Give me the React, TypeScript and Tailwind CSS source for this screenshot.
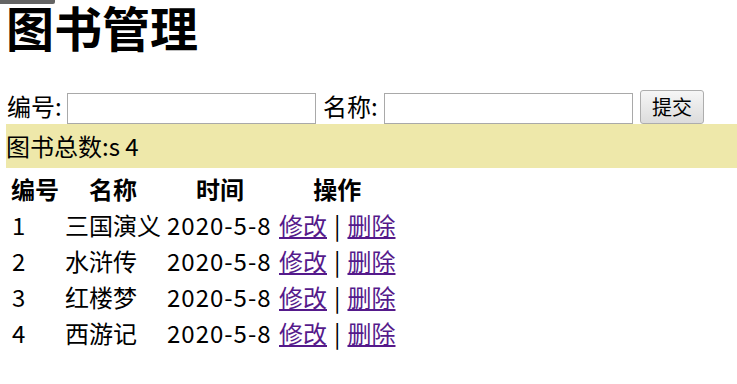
import React from "react";

type Book = { id: number; name: string; time: string };

const books: Book[] = [
  { id: 1, name: "三国演义", time: "2020-5-8" },
  { id: 2, name: "水浒传", time: "2020-5-8" },
  { id: 3, name: "红楼梦", time: "2020-5-8" },
  { id: 4, name: "西游记", time: "2020-5-8" },
];

const App: React.FC = () => {
  return (
    <div
      className="relative min-h-screen bg-white pl-[6px] text-black"
      style={{ fontFamily: '"Noto Sans CJK SC", "Noto Sans", sans-serif' }}
    >
      {/* dark strip in the top-left corner */}
      <div className="absolute left-0 top-0 h-[4px] w-[55px] rounded-br-[2px] bg-[#646464]" />

      <h1 className="m-0 whitespace-nowrap text-[48px] font-bold leading-[52px]">图书管理</h1>

      {/* search form */}
      <div className="mt-[37px] flex h-[35px] items-end gap-[7px] pl-[1px]">
        <label className="mb-[3px] w-[53px] shrink-0 whitespace-nowrap text-[24px] leading-[30px]">
          编号:
        </label>
        <input
          type="text"
          className="h-[31px] w-[249px] shrink-0 border border-[#a9a9a9] bg-white outline-none"
        />
        <label className="mb-[3px] w-[54px] shrink-0 whitespace-nowrap text-[24px] leading-[30px]">
          名称:
        </label>
        <input
          type="text"
          className="h-[31px] w-[249px] shrink-0 border border-[#a9a9a9] bg-white outline-none"
        />
        <button
          type="button"
          className="h-[34px] w-[64px] shrink-0 rounded-[3px] border border-[#adadad] bg-gradient-to-b from-[#f6f6f6] to-[#dcdcdc] text-[20px] leading-[30px]"
        >
          提交
        </button>
      </div>

      {/* total */}
      <div className="h-[44px] whitespace-nowrap bg-[#eee8aa] text-[24px] leading-[44px]">
        图书总数:s 4
      </div>

      {/* book list */}
      <table className="ml-[1px] mt-[2px] border-separate border-spacing-x-[2px] border-spacing-y-[3px] text-[24px]">
        <thead>
          <tr className="h-[32px]">
            <th className="w-[52px] px-[2px] text-center font-bold leading-[32px]">编号</th>
            <th className="w-[100px] px-[2px] text-center font-bold leading-[32px]">名称</th>
            <th className="w-[110px] px-[2px] text-center font-bold leading-[32px]">时间</th>
            <th className="w-[120px] px-[2px] text-center font-bold leading-[32px]">操作</th>
          </tr>
        </thead>
        <tbody>
          {books.map((b) => (
            <tr key={b.id} className="h-[33px]">
              <td className="px-[2px] pl-[3px] leading-[33px]">{b.id}</td>
              <td className="whitespace-nowrap px-[2px] leading-[33px]">{b.name}</td>
              <td className="whitespace-nowrap px-[2px] leading-[33px] tracking-[1px]">{b.time}</td>
              <td className="whitespace-nowrap px-[2px] leading-[33px]">
                <a href="#" className="text-[#551a8b] underline">
                  修改
                </a>
                <span className="mx-[7px]">|</span>
                <a href="#" className="text-[#551a8b] underline">
                  删除
                </a>
              </td>
            </tr>
          ))}
        </tbody>
      </table>
    </div>
  );
};

export default App;
